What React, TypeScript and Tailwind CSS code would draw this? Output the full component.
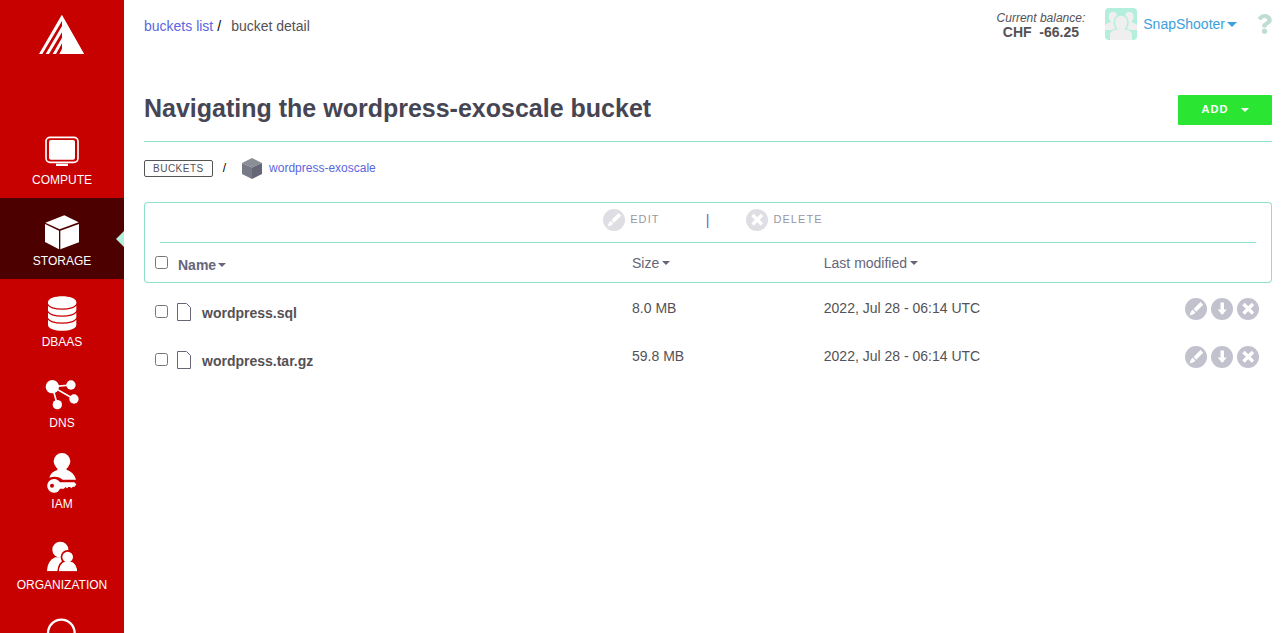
import {ReactNode, useState} from "react";
import {FaQuestion} from "react-icons/fa";

type BucketFile = {
    name: string;
    size: string;
    modified: string;
}

type NavItem = {
    label: string;
    icon: ReactNode;
    active?: boolean;
}

const files: BucketFile[] = [
    {name: 'wordpress.sql', size: '8.0 MB', modified: '2022, Jul 28 - 06:14 UTC'},
    {name: 'wordpress.tar.gz', size: '59.8 MB', modified: '2022, Jul 28 - 06:14 UTC'},
];

const navItems: NavItem[] = [
    {
        label: 'COMPUTE',
        icon: (
            <>
                <rect x="12" y="19" width="96" height="75" rx="12" fill="none" stroke="currentColor" strokeWidth="5"/>
                <rect x="21" y="27" width="78" height="59" rx="6"/>
                <rect x="42" y="98" width="36" height="7"/>
            </>
        ),
    },
    {
        label: 'STORAGE',
        active: true,
        icon: (
            <>
                <path d="M67 10 110 31 53 52 10 32Z"/>
                <path d="M9 36 51 56V112L9 90Z"/>
                <path d="M55 56 111 36V91L55 112Z"/>
            </>
        ),
    },
    {
        label: 'DBAAS',
        icon: (
            <>
                <path d="M18 28C18 4 103 4 103 28V95C103 119 18 119 18 95Z"/>
                <g fill="none" stroke="#c70000" strokeWidth="4">
                    <path d="M16 32C22 54 99 54 105 32"/>
                    <path d="M16 53C22 75 99 75 105 53"/>
                    <path d="M16 74C22 96 99 96 105 74"/>
                </g>
            </>
        ),
    },
    {
        label: 'DNS',
        icon: (
            <>
                <path d="M87 33 31 38 96 75M31 38 46 92" fill="none" stroke="currentColor" strokeWidth="5"/>
                <circle cx="31" cy="38" r="20"/>
                <circle cx="87" cy="33" r="14"/>
                <circle cx="96" cy="75" r="14"/>
                <circle cx="46" cy="92" r="14"/>
            </>
        ),
    },
    {
        label: 'IAM',
        icon: (
            <>
                <circle cx="60" cy="19" r="25"/>
                <path d="M46 38H74V45C89 49 98 60 102 74H62C52 65 38 62 22 68C25 56 33 49 46 45Z"/>
                <path
                    fillRule="evenodd"
                    d="M36 72C45 72 50 76 54 82H97L103 88 98 95 92 95 89 100 84 96 79 96 75 100 70 96 66 101H54C51 108 45 113 36 113A20 20 0 0 1 36 72ZM30 86A6 6 0 1 0 30 98 6 6 0 0 0 30 86Z"
                />
            </>
        ),
    },
    {
        label: 'ORGANIZATION',
        icon: (
            <>
                <circle cx="55" cy="41" r="24"/>
                <path d="M15 106C16 84 24 70 40 64H66V106Z"/>
                <g stroke="#c70000" strokeWidth="10" paintOrder="stroke">
                    <path d="M51 106C52 91 58 81 69 77H87C98 81 104 91 105 106Z"/>
                    <circle cx="77" cy="63" r="16"/>
                </g>
                <path d="M51 106C52 91 58 81 69 77H87C98 81 104 91 105 106Z"/>
                <path d="M8 106H112V114H8Z" fill="#c70000"/>
            </>
        ),
    },
];

const Caret = ({className = 'w-2 h-1'}: {className?: string}) => (
    <svg viewBox="0 0 8 4" className={`fill-current ${className}`} aria-hidden="true">
        <path d="M0 0H8L4 4Z"/>
    </svg>
);

const PencilIcon = () => (
    <svg viewBox="0 0 22 22" className="size-[22px]" aria-hidden="true">
        <circle cx="11" cy="11" r="11" fill="currentColor"/>
        <path d="M15.500 4 18.200 6.700 11.200 13.700 8.500 11ZM7.700 11.800 10.400 14.500 8.700 16.200 4.500 17.500 6 13.500Z" fill="white"/>
    </svg>
);

const DownloadIcon = () => (
    <svg viewBox="0 0 22 22" className="size-[22px]" aria-hidden="true">
        <circle cx="11" cy="11" r="11" fill="currentColor"/>
        <path d="M9.500 4.500H13V11.500H15.800L11.200 17 6.700 11.500H9.500Z" fill="white"/>
    </svg>
);

const RemoveIcon = () => (
    <svg viewBox="0 0 22 22" className="size-[22px]" aria-hidden="true">
        <circle cx="11" cy="11" r="11" fill="currentColor"/>
        <path d="M6.500 6 16 15.500M16 6 6.500 15.500" stroke="white" strokeWidth="3.400" fill="none"/>
    </svg>
);

const FileIcon = () => (
    <svg viewBox="0 0 16 19" className="w-4 h-[19px] shrink-0" fill="none" stroke="#66667a" aria-hidden="true">
        <path d="M.5.5H9.500L13.500 4.500V17.500H.5Z"/>
    </svg>
);

const CubeIcon = () => (
    <svg viewBox="0 0 20 21" className="w-5 h-[21px]" aria-hidden="true">
        <path d="M10 0 20 5 10 9.500 0 5Z" fill="#8b8e95"/>
        <path d="M0 5 10 9.500V21L0 16Z" fill="#777a86"/>
        <path d="M20 5 10 9.500V21L20 16Z" fill="#656779"/>
    </svg>
);

const Avatar = () => (
    <svg viewBox="0 0 96 96" className="size-8 rounded" aria-hidden="true">
        <rect width="96" height="96" fill="#b4eedd"/>
        <g fill="#efefef">
            <ellipse cx="24" cy="26" rx="13" ry="15"/>
            <ellipse cx="73" cy="26" rx="13" ry="15"/>
            <path d="M0 52C4 45 12 45 17 43V36H31V43L40 50V66H0ZM96 52C92 45 84 45 80 43V36H66V43L57 50V66H96Z"/>
        </g>
        <g fill="#efefef" stroke="#b4eedd" strokeWidth="8" paintOrder="stroke">
            <path d="M15 100V80C15 70 26 66 39 63C29 54 29 42 32 34C37 20 60 20 65 34C68 42 68 54 58 63C71 66 81 70 81 80V100Z"/>
        </g>
    </svg>
);

const Sidebar = () => (
    <nav className="w-[124px] h-screen sticky top-0 shrink-0 overflow-hidden bg-[#c70000] text-white">
        <a href="#" aria-label="Home" className="flex justify-center h-[117px] pt-[15px] pr-0.5">
            <svg viewBox="0 0 135 117" className="w-[45px] h-[39px] fill-white" aria-hidden="true">
                <path d="M68 0 135 117H61L69 101V85L51 117H41L69 68V52L30 117H20L69 33V18L10 117H0Z"/>
                <path d="M69 0 135 117H69Z"/>
            </svg>
        </a>
        {navItems.map(item => (
            <a
                key={item.label}
                href="#"
                className={`relative flex flex-col items-center gap-px h-[81px] pt-3.5 text-xs ${item.active ? 'bg-[#4d0000]' : ''}`}
            >
                <svg viewBox="0 0 120 120" className="size-10 fill-current overflow-visible" aria-hidden="true">
                    {item.icon}
                </svg>
                <span>{item.label}</span>
                {item.active && (
                    <svg viewBox="0 0 8 16" className="absolute right-0 top-[33px] w-2 h-4 fill-[#b4eedd]" aria-hidden="true">
                        <path d="M8 0V16L0 8Z"/>
                    </svg>
                )}
            </a>
        ))}
        <a href="#" aria-label="Support" className="flex flex-col items-center h-[81px] pt-3.5">
            <svg viewBox="0 0 120 120" className="size-10" fill="none" stroke="currentColor" strokeWidth="7" aria-hidden="true">
                <circle cx="58" cy="48" r="40"/>
            </svg>
        </a>
    </nav>
);

export default function App() {
    const [selected, setSelected] = useState<string[]>([]);

    const toggle = (name: string) => {
        setSelected(current => current.includes(name) ? current.filter(n => n !== name) : [...current, name]);
    };

    const toggleAll = () => {
        setSelected(selected.length === files.length ? [] : files.map(file => file.name));
    };

    return (
        <div className="flex min-h-screen bg-white text-sm text-[#555155] font-['Liberation_Sans',Arial,sans-serif]">
            <Sidebar/>
            <main className="flex-1 min-w-0 pl-5 pr-[13px]">
                <header className="flex justify-between items-start">
                    <div className="pt-4">
                        <a href="#" className="text-[#5b66e0]">buckets list</a>
                        <span className="text-black pl-1 pr-2.5">/</span>
                        <span>bucket detail</span>
                    </div>
                    <div className="flex items-center pt-2">
                        <div className="mr-5 pt-0.5 text-center leading-[14px]">
                            <div className="text-xs leading-[14px] italic">Current balance:</div>
                            <div className="font-bold whitespace-pre">CHF  -66.25</div>
                        </div>
                        <button className="flex items-center mr-5 text-[#3d9fdc]">
                            <Avatar/>
                            <span className="ml-1.5 mr-0.5">SnapShooter</span>
                            <Caret className="w-2.5 h-[5px]"/>
                        </button>
                        <button aria-label="Help" className="text-[#c0ddd4]">
                            <FaQuestion className="w-[15px] h-[22px]"/>
                        </button>
                    </div>
                </header>

                <div className="flex justify-between items-center mt-[55px] pb-4 border-b border-[#8ce2ca]">
                    <h1 className="text-[25px] leading-[30px] font-bold text-[#464554] -mt-1">
                        Navigating the wordpress-exoscale bucket
                    </h1>
                    <button className="flex items-center justify-center gap-3 w-[94px] h-[30px] bg-[#2ae633] text-white text-[11px] font-bold tracking-widest rounded-[1px]">
                        ADD
                        <Caret/>
                    </button>
                </div>

                <div className="flex items-center h-[22px] mt-[15px] text-xs">
                    <button className="h-[17px] px-2 border border-[#555] rounded-xs text-[10px] leading-[15px] tracking-wider">
                        BUCKETS
                    </button>
                    <span className="text-black ml-2.5 mr-4">/</span>
                    <CubeIcon/>
                    <a href="#" className="ml-[7px] text-[#5b66e0]">wordpress-exoscale</a>
                </div>

                <table className="w-full mt-[23px] table-fixed border-separate border-spacing-0 text-left">
                    <colgroup>
                        <col className="w-[43%]"/>
                        <col className="w-[17%]"/>
                        <col/>
                        <col className="w-[100px]"/>
                    </colgroup>
                    <thead className="text-[#66667a]">
                        <tr>
                            <td colSpan={4} className="px-[15px] border border-b-0 border-[#8ce2ca] rounded-t">
                                <div className="grid grid-cols-[1fr_auto_1fr] items-center h-10 pb-1.5 border-b border-[#8ce2ca] text-[11px] tracking-widest text-[#9797a5]">
                                    <button className="flex items-center gap-[5px] justify-self-end mr-[46px]">
                                        <span className="text-[#dedee4]"><PencilIcon/></span>
                                        EDIT
                                    </button>
                                    <span className="text-sm text-[#5b66c0]">|</span>
                                    <button className="flex items-center gap-[5px] justify-self-start ml-9">
                                        <span className="text-[#dedee4]"><RemoveIcon/></span>
                                        DELETE
                                    </button>
                                </div>
                            </td>
                        </tr>
                        <tr className="h-10">
                            <th className="pl-2.5 border-b border-l border-[#8ce2ca] rounded-bl">
                                <div className="flex items-center gap-2.5">
                                    <input type="checkbox" aria-label="Select all files" checked={selected.length === files.length} onChange={toggleAll}/>
                                    <button className="flex items-center gap-0.5 pt-1">Name<Caret/></button>
                                </div>
                            </th>
                            <th className="pl-[3px] border-b border-[#8ce2ca] font-normal">
                                <button className="flex items-center gap-[3px]">Size<Caret/></button>
                            </th>
                            <th className="pl-[3px] border-b border-[#8ce2ca] font-normal">
                                <button className="flex items-center gap-[3px]">Last modified<Caret/></button>
                            </th>
                            <td className="border-b border-r border-[#8ce2ca] rounded-br"/>
                        </tr>
                    </thead>
                    <tbody>
                        {files.map(file => (
                            <tr key={file.name} className="h-12 align-top">
                                <td className="pl-[11px] pt-5">
                                    <label className="flex items-start gap-[9px] font-bold">
                                        <input type="checkbox" className="mt-0.5" checked={selected.includes(file.name)} onChange={() => toggle(file.name)}/>
                                        <FileIcon/>
                                        {file.name}
                                    </label>
                                </td>
                                <td className="pl-[3px] pt-[15px]">{file.size}</td>
                                <td className="pl-[3px] pt-[15px]">{file.modified}</td>
                                <td className="pr-[13px] pt-[15px]">
                                    <div className="flex justify-end gap-1 text-[#c2c1ce]">
                                        <button aria-label={`Edit ${file.name}`}><PencilIcon/></button>
                                        <button aria-label={`Download ${file.name}`}><DownloadIcon/></button>
                                        <button aria-label={`Delete ${file.name}`}><RemoveIcon/></button>
                                    </div>
                                </td>
                            </tr>
                        ))}
                    </tbody>
                </table>
            </main>
        </div>
    );
}
